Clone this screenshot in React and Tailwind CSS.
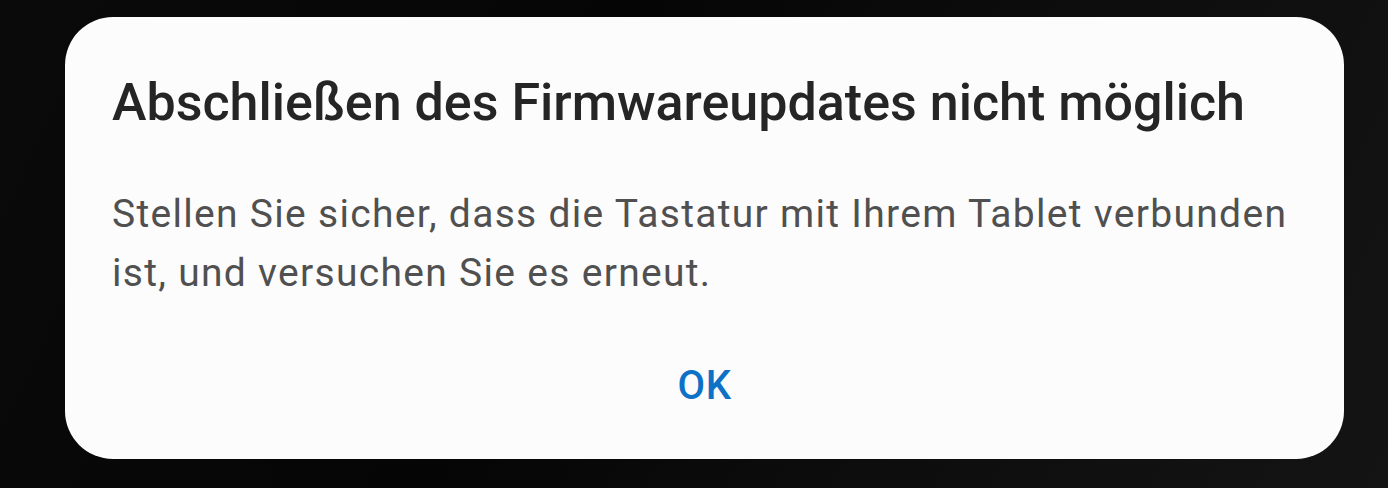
import React from 'react';

const App = () => {
    return (
        <div className="w-[1388px] h-[488px] overflow-hidden bg-[#060606] bg-[linear-gradient(115deg,#0a0a0a_0%,#050505_40%,#0b0b0b_60%,#141414_100%)] pl-[65px] pt-[17px] font-['Roboto',sans-serif]">
            {/* Dialog */}
            <div className="w-[1279px] h-[442px] rounded-[48px] bg-[#fcfcfc] flex flex-col px-[47px] pt-[60px]">
                <h1 className="text-[52px] leading-[52px] font-medium text-[#252525] whitespace-nowrap">
                    Abschließen des Firmwareupdates nicht möglich
                </h1>
                <p className="mt-[56px] text-[39px] leading-[59px] text-[#505050] tracking-[1.3px] whitespace-nowrap">
                    Stellen Sie sicher, dass die Tastatur mit Ihrem Tablet verbunden
                    <br />
                    ist, und versuchen Sie es erneut.
                </p>
                <div className="mt-[63px] flex justify-center">
                    <button className="text-[40px] leading-[40px] font-medium text-[#0d72c6] tracking-[0.5px]">
                        OK
                    </button>
                </div>
            </div>
        </div>
    );
};

export default App;
